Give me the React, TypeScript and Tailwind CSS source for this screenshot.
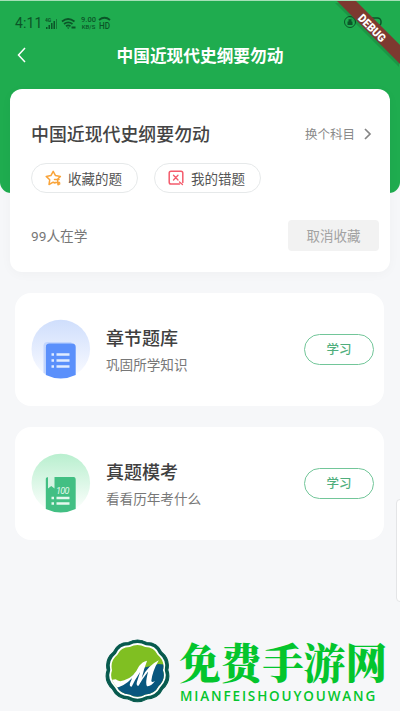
import type { ReactNode } from 'react';
import clsx from 'clsx';

const StatusBar = () => {
  return (
    <div className="flex h-[36px] items-center pt-[8px] pl-[15px] text-[#0b5528]">
      <span className="w-[28px] text-[14px] tracking-[0.1px]">4:11</span>
      <svg width="13" height="13" viewBox="0 0 13 13" className="ml-[2px]" fill="currentColor">
        <path d="M1 10h1.500v2H1zM3.500 8H5v4H3.500zM6 6h1.500v6H6zM8.500 4H10v8H8.500z" />
        <path d="M11.500 2v10" stroke="currentColor" strokeWidth="0.6" />
        <text x="0" y="5" fontSize="5" fontWeight="700">4G</text>
      </svg>
      <svg width="16" height="13" viewBox="0 0 16 13" className="ml-[3px]" fill="none" stroke="currentColor" strokeWidth="1.700">
        <path d="M1 4.500q6-5 12.500 0M3 7q4.200-3.300 8.500 0M5 9.200q2.200-1.600 4.500 0" />
        <path d="M6 10.500h2.500L7.200 12z" fill="currentColor" stroke="none" />
        <path d="M10.500 10.500h4" strokeWidth="2" />
      </svg>
      <div className="ml-[3px] flex w-[17px] flex-col text-center text-[7.500px] leading-[8px] font-medium">
        <span>9.00</span>
        <span className="text-[6px] leading-[6px]">KB/S</span>
      </div>
      <svg width="13" height="14" viewBox="0 0 13 14" className="ml-[1px]" fill="currentColor">
        <path d="M1 4q5.500-4.500 11 0" fill="none" stroke="currentColor" strokeWidth="1.800" />
        <text x="1" y="13" fontSize="9.500" fontWeight="500" textLength="11" lengthAdjust="spacingAndGlyphs">HD</text>
      </svg>
      <svg width="40" height="14" viewBox="0 0 40 14" className="ml-[232px]" fill="none" stroke="currentColor">
        <circle cx="7" cy="6" r="5.500" />
        <path d="M4.500 5.500h5V9h-5zM5.500 5.500V3.200h3v2.300z" fill="currentColor" stroke="none" />
        <rect x="21" y="2" width="17" height="8" rx="3.500" strokeWidth="1.500" />
      </svg>
    </div>
  );
};

const DebugRibbon = () => {
  return (
    <svg width="70" height="70" viewBox="0 0 70 70" className="absolute top-0 right-0">
      <path d="M6 1h20l44 44v20z" fill="#000" opacity="0.120" transform="translate(-1 2)" />
      <path d="M7 1h19l44 44v19z" fill="#7d3930" />
      <text
        x="42"
        y="32"
        fill="#fff"
        fontSize="11.500"
        fontWeight="900"
        textAnchor="middle"
        textLength="34"
        lengthAdjust="spacingAndGlyphs"
        transform="rotate(45 42 28)"
      >
        DEBUG
      </text>
    </svg>
  );
};

const StarIcon = () => {
  return (
    <svg width="17" height="17" viewBox="0 0 17 17" fill="none" stroke="#f9a43a" strokeWidth="1.500" strokeLinejoin="round" strokeLinecap="round">
      <path d="M10 13L8.200 12.200 4 14.500l.7-4.700L1.200 6.400l4.700-.8L8.200 1.300l2.300 4.300 4.900.8-2.400 2.300" />
      <path d="M9.500 9.500h4.500M12.500 9.500l.5 5.200 1.800-.8M10 12.500h4.500" />
    </svg>
  );
};

const WrongIcon = () => {
  return (
    <svg width="17" height="17" viewBox="0 0 17 17" fill="none" stroke="#f45b6c" strokeWidth="1.500" strokeLinecap="round" strokeLinejoin="round">
      <path d="M11.500 14H3A1.800 1.800 0 0 1 1.200 12.200V3A1.800 1.800 0 0 1 3 1.200h10A1.800 1.800 0 0 1 14.800 3v9.500" />
      <path d="M5.500 5.200l4.500 4.800M10 5.200L5.500 10" strokeWidth="1.300" />
      <path d="M11.500 12l3 2.500" strokeWidth="1.300" />
    </svg>
  );
};

const ChapterIcon = () => {
  return (
    <svg width="60" height="62" viewBox="0 0 60 62">
      <defs>
        <linearGradient id="blueCircle" x1="0" y1="0" x2="0" y2="1">
          <stop offset="0" stopColor="#cfdefc" />
          <stop offset="0.850" stopColor="#f4f7ff" />
          <stop offset="1" stopColor="#fff" />
        </linearGradient>
      </defs>
      <circle cx="29.800" cy="30" r="29.300" fill="url(#blueCircle)" />
      <path d="M12.500 27q0-4 4-4h24v4h-26v28l-2-1z" fill="#c3d6fd" />
      <path d="M14.800 28q0-3.500 3.500-3.500h22.900q3.500 0 3.500 3.500v28q-15 7-29.900 0z" fill="#5b90fb" />
      <path d="M25.500 35.500h13M25.500 41.500h13M25.500 47.500h13" stroke="#e1ecff" strokeWidth="2.400" />
      <path d="M20.500 35.500H23M20.500 41.500H23M20.500 47.500H23" stroke="#e1ecff" strokeWidth="2.400" />
    </svg>
  );
};

const ExamIcon = () => {
  return (
    <svg width="60" height="62" viewBox="0 0 60 62">
      <defs>
        <linearGradient id="greenCircle" x1="0" y1="0" x2="0" y2="1">
          <stop offset="0" stopColor="#b9efcf" />
          <stop offset="0.800" stopColor="#f1fcf5" />
          <stop offset="1" stopColor="#fff" />
        </linearGradient>
      </defs>
      <circle cx="29.800" cy="30" r="29.300" fill="url(#greenCircle)" />
      <path d="M14.800 26q0-2 3-2h24.900q2 0 2 3v29q-15 7-29.900 0z" fill="#42bf83" />
      <path d="M17 23.500h6.500V35.500l-3.200-2.500-3.300 2.500z" fill="#d5f3e2" />
      <text x="25" y="40.500" fontSize="9" fontStyle="italic" fill="#e4f8ed" textLength="13.500" className="font-['Roboto']">100</text>
      <path d="M25.500 45h13M25.500 50.500h13M20.500 45H23M20.500 50.500H23" stroke="#e4f8ed" strokeWidth="2.400" />
    </svg>
  );
};

interface PillProps {
  icon: ReactNode;
  label: string;
}

const Pill = ({ icon, label }: PillProps) => {
  return (
    <button
      className={clsx(
        'flex h-[30px] w-[107px] items-center gap-[6px] rounded-full border-[1.5px] border-[#e6e9ea]',
        'pl-[13px] text-[13.5px] whitespace-nowrap text-[#555]',
      )}
    >
      {icon}
      <span className="pt-[2px]">{label}</span>
    </button>
  );
};

interface StudyCardProps {
  icon: ReactNode;
  title: string;
  subtitle: string;
}

const StudyCard = ({ icon, title, subtitle }: StudyCardProps) => {
  return (
    <div className="flex h-[113px] items-center rounded-[16px] bg-white pr-[10px] pl-[16px]">
      {icon}
      <div className="ml-[15px] flex-1 pt-[3px]">
        <p className="text-[18px] leading-[27px] font-medium text-[#404040]">{title}</p>
        <p className="mt-[1px] text-[13.600px] leading-[24px] text-[#777]">{subtitle}</p>
      </div>
      <button className="h-[31px] w-[70px] rounded-full border-[1.5px] border-[#72c699] pt-[2px] text-[12.5px] font-medium text-[#4fae7c]">
        学习
      </button>
    </div>
  );
};

// ten rounded lobes
const badgePath =
  'M24.800 4Q33.500-1 42.200 4 52.300 4 56 13.500 64.500 21 62 32 65.500 43 57 51.500 53 60.500 42.500 61.500 33.500 67 24.500 61.500 14 60.500 10 51.500 1.500 43 5 32 2.500 21 11 13.500 14.700 4 24.800 4z';

const WatermarkLogo = () => {
  return (
    <svg width="67" height="64" viewBox="2 0.5 63 65" preserveAspectRatio="none">
      <defs>
        <clipPath id="badge">
          <path d={badgePath} transform="translate(33.500 33) scale(0.840) translate(-33.500 -33)" />
        </clipPath>
      </defs>
      <path d={badgePath} fill="#075a4e" stroke="#075a4e" strokeLinejoin="round" />
      <path d={badgePath} fill="#fff" transform="translate(33.500 33) scale(0.900) translate(-33.500 -33)" />
      <g clipPath="url(#badge)">
        <path d="M0 0h67v67H0z" fill="#80bf22" />
        <path d="M4 52q17-2 23-13l11-9 12-3 3-1 14 1v40H4z" fill="#09577e" />
        <path
          d="M4 43L13 41.500Q16 44.500 21 42.500 30 40 35 28 38 23.500 42.500 22.500 39.500 31 37.500 40 43 27.500 53.500 22 47.500 33 46.500 43 47 45.500 50 43 46.500 49 42.500 48.500 40.500 46 43.500 33.500 38 41 34.500 48 32 48.500 33 44L36 34Q31 42 28 49 25 49 27 44L28.500 40Q21 49 10 51L4 53z"
          fill="#fff"
        />
      </g>
    </svg>
  );
};

const Watermark = () => {
  return (
    <div className="absolute top-[639px] left-[104px] flex">
      <WatermarkLogo />
      <div className="ml-[8px] flex flex-col text-[#04c52d]">
        <span className="flex h-[48px] items-center font-['Noto_Serif_CJK_SC','Noto_Sans_CJK_SC',serif] text-[41.600px] leading-[48px] font-black whitespace-nowrap">
          <span className="-mt-[4px]">免费手游网</span>
        </span>
        <span className="ml-px font-['Open_Sans','Noto_Sans',sans-serif] text-[13.5px] leading-[18px] font-semibold tracking-[1.850px]">
          MIANFEISHOUYOUWANG
        </span>
      </div>
    </div>
  );
};

const App = () => {
  return (
    <div className="relative h-[711px] w-[400px] overflow-hidden bg-[#f6f7f9] font-['Roboto','Noto_Sans_CJK_SC',sans-serif]">
      <header className="h-[193px] rounded-b-[11px] border-t border-[#a5dfb7] bg-[#1fac4f]">
        <StatusBar />
        <div className="relative flex h-[38px] items-center justify-center pt-[2px]">
          <svg width="9" height="16" viewBox="0 0 9 16" className="absolute top-[10px] left-[17px]" fill="none" stroke="#fff" strokeWidth="1.500">
            <path d="M8 1L1.500 8 8 15" />
          </svg>
          <h1 className="text-[16.700px] font-bold text-white">中国近现代史纲要勿动</h1>
        </div>
      </header>
      <DebugRibbon />

      <main className="relative -mt-[104px]">
        <section className="mx-[10px] flex h-[183px] flex-col rounded-[12px] bg-white pr-[11px] pl-[21px] shadow-[0_2px_12px_rgba(0,0,0,0.03)]">
          <div className="mt-[31px] flex h-[28px] items-center justify-between pt-[3px]">
            <h2 className="text-[17.900px] font-medium text-[#444]">中国近现代史纲要勿动</h2>
            <div className="mr-[7px] flex items-center text-[12.5px] text-[#8a8a8a]">
              换个科目
              <svg width="8" height="12" viewBox="0 0 8 12" className="-mt-[3px] ml-[9px]" fill="none" stroke="#858585" strokeWidth="1.700">
                <path d="M1 1l5 5-5 5" />
              </svg>
            </div>
          </div>
          <div className="mt-[15px] flex gap-[16px]">
            <Pill icon={<StarIcon />} label="收藏的题" />
            <Pill icon={<WrongIcon />} label="我的错题" />
          </div>
          <div className="mt-[27px] flex h-[31px] items-center justify-between">
            <span className="pt-[2px] text-[13.700px] text-[#777]">99人在学</span>
            <button className="h-[31px] w-[91px] rounded-[4px] bg-[#f2f2f2] pt-[2px] text-[13.5px] text-[#a2a2a2]">
              取消收藏
            </button>
          </div>
        </section>

        <section className="mt-[21px] mr-[16px] ml-[15px] flex flex-col gap-[21px]">
          <StudyCard icon={<ChapterIcon />} title="章节题库" subtitle="巩固所学知识" />
          <StudyCard icon={<ExamIcon />} title="真题模考" subtitle="看看历年考什么" />
        </section>
      </main>

      <div className="absolute top-[499px] -right-[4px] h-[103px] w-[8px] rounded-l-[4px] border border-[#e4e5e7] bg-white" />
      <Watermark />
    </div>
  );
};

export default App;
